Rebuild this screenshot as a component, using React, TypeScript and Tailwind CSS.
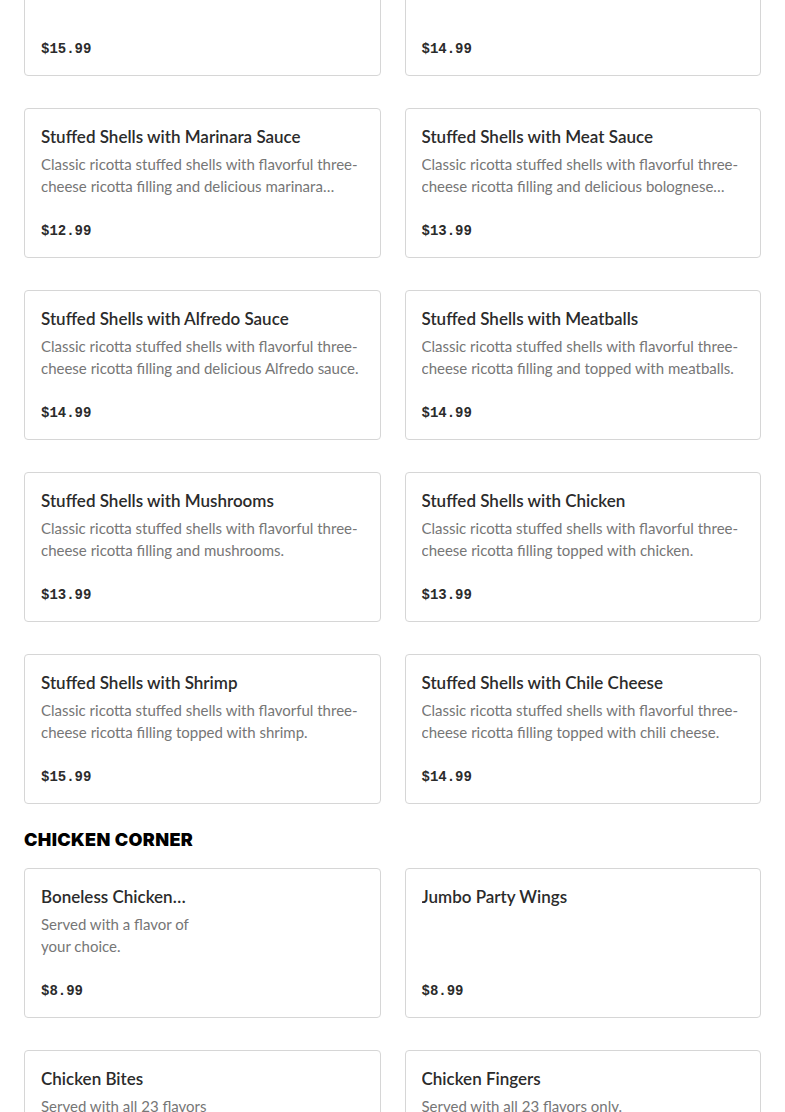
import React from 'react';

type Item = {
  name: string;
  description?: string;
  price: string;
  narrow?: boolean;
};

const shells: Item[] = [
  { name: 'Stuffed Shells with Sausage', description: 'Classic ricotta stuffed shells with sausage.', price: '$15.99' },
  { name: 'Stuffed Shells with Vodka Sauce', description: 'Classic ricotta stuffed shells with vodka sauce.', price: '$14.99' },
  { name: 'Stuffed Shells with Marinara Sauce', description: 'Classic ricotta stuffed shells with flavorful three-cheese ricotta filling and delicious marinara sauce.', price: '$12.99' },
  { name: 'Stuffed Shells with Meat Sauce', description: 'Classic ricotta stuffed shells with flavorful three-cheese ricotta filling and delicious bolognese sauce.', price: '$13.99' },
  { name: 'Stuffed Shells with Alfredo Sauce', description: 'Classic ricotta stuffed shells with flavorful three-cheese ricotta filling and delicious Alfredo sauce.', price: '$14.99' },
  { name: 'Stuffed Shells with Meatballs', description: 'Classic ricotta stuffed shells with flavorful three-cheese ricotta filling and topped with meatballs.', price: '$14.99' },
  { name: 'Stuffed Shells with Mushrooms', description: 'Classic ricotta stuffed shells with flavorful three-cheese ricotta filling and mushrooms.', price: '$13.99' },
  { name: 'Stuffed Shells with Chicken', description: 'Classic ricotta stuffed shells with flavorful three-cheese ricotta filling topped with chicken.', price: '$13.99' },
  { name: 'Stuffed Shells with Shrimp', description: 'Classic ricotta stuffed shells with flavorful three-cheese ricotta filling topped with shrimp.', price: '$15.99' },
  { name: 'Stuffed Shells with Chile Cheese', description: 'Classic ricotta stuffed shells with flavorful three-cheese ricotta filling topped with chili cheese.', price: '$14.99' },
];

const chicken: Item[] = [
  { name: 'Boneless Chicken Wings', description: 'Served with a flavor of your choice.', price: '$8.99', narrow: true },
  { name: 'Jumbo Party Wings', price: '$8.99' },
  { name: 'Chicken Bites', description: 'Served with all 23 flavors only.', price: '$9.99', narrow: true },
  { name: 'Chicken Fingers', description: 'Served with all 23 flavors only.', price: '$9.99' },
];

const MenuCard: React.FC<{ item: Item }> = ({ item }) => (
  <div className="h-[150px] flex flex-col justify-between border border-[#d6d6d6] rounded-[4px] bg-white p-4">
    <div className={item.narrow ? 'max-w-[180px]' : ''}>
      <h3
        className={
          item.narrow
            ? 'max-w-[148px] text-[17px] leading-6 font-semibold text-[#2b2b2b] truncate'
            : 'text-[17px] leading-6 font-semibold text-[#2b2b2b] truncate'
        }
      >
        {item.name}
      </h3>
      {item.description && (
        <p className="mt-1 text-[15px] leading-[22px] text-[#767676] line-clamp-2">{item.description}</p>
      )}
    </div>
    <div className="font-['Liberation_Mono',monospace] font-bold text-[14px] leading-5 text-[#2b2b2b]">
      {item.price}
    </div>
  </div>
);

export default function App() {
  return (
    <div className="h-[1112px] overflow-hidden bg-white font-['Lato',sans-serif]">
      <div className="px-6 -mt-[74px]">
        <div className="grid grid-cols-2 gap-x-6 gap-y-8">
          {shells.map((item) => (
            <MenuCard key={item.name} item={item} />
          ))}
        </div>
        <h2 className="mt-6 mb-4 font-['Inter',sans-serif] text-[18px] leading-6 font-black tracking-[0.02em] text-black uppercase">
          Chicken Corner
        </h2>
        <div className="grid grid-cols-2 gap-x-6 gap-y-8">
          {chicken.map((item) => (
            <MenuCard key={item.name} item={item} />
          ))}
        </div>
      </div>
    </div>
  );
}
